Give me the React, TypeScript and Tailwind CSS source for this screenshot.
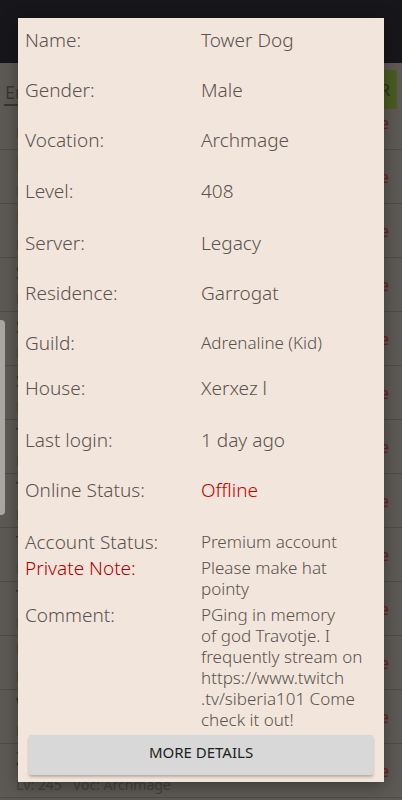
import type { ReactNode } from "react"

// Rows of the list that sits behind the dialog
const players = [
  { name: "Faithful Knight", lv: 312, voc: "Elite Knight" },
  { name: "Frost Bite", lv: 188, voc: "Master Sorcerer" },
  { name: "Sir Galahad", lv: 402, voc: "Royal Paladin" },
  { name: "Shadow Ranger", lv: 276, voc: "Royal Paladin" },
  { name: "Storm Caller", lv: 355, voc: "Elder Druid" },
  { name: "Thorn Shield", lv: 221, voc: "Elite Knight" },
  { name: "Tiny Tim", lv: 149, voc: "Druid" },
  { name: "Tower Cat", lv: 389, voc: "Archmage" },
  { name: "Tower Dog", lv: 408, voc: "Archmage" },
  { name: "Ulric the Bold", lv: 301, voc: "Elite Knight" },
  { name: "Wild Mushroom", lv: 267, voc: "Elder Druid" },
  { name: "Zarabustor", lv: 245, voc: "Archmage" },
]

type Row = {
  label: string
  value: ReactNode
  h: string
  small?: boolean
  multi?: boolean
  red?: boolean
  redValue?: boolean
}

const rows: Row[] = [
  { label: "Name:", value: "Tower Dog", h: "h-[50px]" },
  { label: "Gender:", value: "Male", h: "h-[50px]" },
  { label: "Vocation:", value: "Archmage", h: "h-[51px]" },
  { label: "Level:", value: "408", h: "h-[52px]" },
  { label: "Server:", value: "Legacy", h: "h-[50px]" },
  { label: "Residence:", value: "Garrogat", h: "h-[50px]" },
  { label: "Guild:", value: "Adrenaline (Kid)", h: "h-[45px]", small: true },
  { label: "House:", value: "Xerxez l", h: "h-[52px]" },
  { label: "Last login:", value: "1 day ago", h: "h-[50px]" },
  { label: "Online Status:", value: "Offline", h: "h-[52px]", redValue: true },
  { label: "Account Status:", value: "Premium account", h: "h-[26px]", small: true },
  { label: "Private Note:", value: "Please make hat pointy", h: "h-[47px]", multi: true, red: true },
  {
    label: "Comment:",
    value: (
      <>
        PGing in memory{"\n"}of god Travotje. I frequently stream on https://www.twitch
        <wbr />
        .tv/siberia101 Come check it out!
      </>
    ),
    h: "h-[133px]",
    multi: true,
  },
]

function Background() {
  return (
    <div className="min-h-[800px] bg-[#5d5954]">
      <div className="h-[63px] bg-[#17161a]" />
      {/* search header */}
      <div className="flex h-[47px] items-start justify-between pt-[7px] pl-[4px] pr-[5px]">
        <div className="mt-[12px] w-[200px] border-b-2 border-[#3a3733] pb-[2px] pl-[1px] text-[18px] leading-[20px] text-[#3a3733]">
          Enter name
        </div>
        <div className="flex h-[39px] w-[72px] items-center justify-end rounded-[2px] bg-[#4a5b22] pr-[7px] text-[16px] text-[#2a2f1a]">
          FILTER
        </div>
      </div>
      {/* partial first row */}
      <div className="flex h-[40px] items-end justify-between border-b border-[#4f4c47] pl-[16px] pr-[13px] pb-[6px]">
        <span className="text-[14px] text-[#44413d]">Lv: 198&nbsp;&nbsp;&nbsp;Voc: Elder Druid</span>
        <span className="mb-[8px] text-[16px] text-[#6b1f1a]">Offline</span>
      </div>
      {players.map((p) => (
        <div
          key={p.name}
          className="flex h-[54px] items-center justify-between border-b border-[#4f4c47] pl-[16px] pr-[13px]"
        >
          <div className="flex flex-col">
            <span className="text-[18px] leading-[24px] text-[#2e2c29]">{p.name}</span>
            <span className="mt-[5px] text-[14px] leading-[20px] text-[#44413d]">
              Lv: {p.lv}&nbsp;&nbsp;&nbsp;Voc: {p.voc}
            </span>
          </div>
          <span className="text-[16px] text-[#6b1f1a]">Offline</span>
        </div>
      ))}
    </div>
  )
}

export default function App() {
  return (
    <div
      className="relative h-[800px] w-[402px] overflow-hidden"
      style={{ fontFamily: '"Noto Sans", "Open Sans", sans-serif' }}
    >
      <Background />

      {/* edge panel handle */}
      <div className="absolute left-0 top-[320px] h-[195px] w-[5px] rounded-r-[4px] bg-[#a9a8a4]" />

      {/* player dialog */}
      <div className="absolute left-[18px] top-[18px] flex h-[764px] w-[366px] flex-col bg-[#f2e5dc] pt-[9px] font-light shadow-[0_4px_16px_rgba(0,0,0,0.35)]">
        {rows.map((r) => (
          <div key={r.label} className={`flex items-start ${r.h}`}>
            <div
              className={`w-[183px] shrink-0 pl-[7px] text-[19px] leading-[26px] ${
                r.red ? "text-[#b30000]" : "text-[#5a534e]"
              }`}
            >
              {r.label}
            </div>
            <div
              className={`w-[170px] whitespace-pre-line ${
                r.multi
                  ? "pt-[2px] text-[17px] leading-[21px]"
                  : r.small
                    ? "text-[17px] leading-[26px]"
                    : "text-[19px] leading-[26px]"
              } ${r.redValue ? "text-[#c40000]" : "text-[#5a534e]"}`}
            >
              {r.value}
            </div>
          </div>
        ))}
        <div className="px-[11px]">
          <button className="flex h-[40px] w-full items-center justify-center rounded-[2px] bg-[#d8d8d8] pb-[5px] text-[15px] font-normal text-[#1f1f1f] shadow-[0_2px_3px_rgba(0,0,0,0.25)]">
            MORE DETAILS
          </button>
        </div>
      </div>
    </div>
  )
}
